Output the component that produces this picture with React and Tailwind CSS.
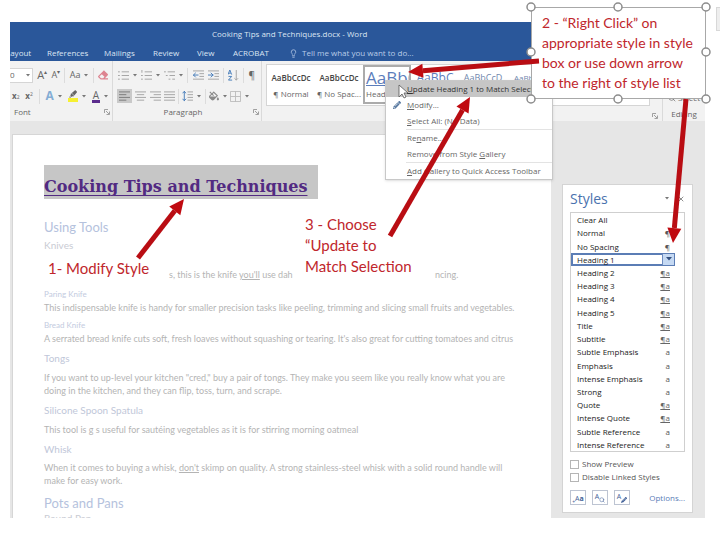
import { FaEraser, FaHighlighter, FaFillDrip, FaPencilAlt } from "react-icons/fa";
import { LuLightbulb, LuSearch, LuX } from "react-icons/lu";

const tabs = [
  { name: "Layout", width: "w-[41px] -ml-1" },
  { name: "References", width: "w-[57px]" },
  { name: "Mailings", width: "w-[49px]" },
  { name: "Review", width: "w-[44px]" },
  { name: "View", width: "w-[36px]" },
  { name: "ACROBAT", width: "w-[54px]" },
];

const styleList = [
  ["Clear All", ""],
  ["Normal", "¶"],
  ["No Spacing", "¶"],
  ["Heading 1", "menu"],
  ["Heading 2", "¶a"],
  ["Heading 3", "¶a"],
  ["Heading 4", "¶a"],
  ["Heading 5", "¶a"],
  ["Title", "¶a"],
  ["Subtitle", "¶a"],
  ["Subtle Emphasis", "a"],
  ["Emphasis", "a"],
  ["Intense Emphasis", "a"],
  ["Strong", "a"],
  ["Quote", "¶a"],
  ["Intense Quote", "¶a"],
  ["Subtle Reference", "a"],
  ["Intense Reference", "a"],
];

// start point and tip of every callout arrow
const arrows = [
  [138, 258, 184, 199],
  [539, 61, 408, 72],
  [390, 236, 470, 97],
  [686, 99, 673, 243],
];

const Arrow = ({ x1, y1, x2, y2 }) => {
  const len = Math.hypot(x2 - x1, y2 - y1);
  const dx = (x2 - x1) / len;
  const dy = (y2 - y1) / len;
  const bx = x2 - dx * 15;
  const by = y2 - dy * 15;
  const points = `${x2},${y2} ${bx - dy * 7},${by + dx * 7} ${bx + dy * 7},${by - dx * 7}`;
  return (
    <g>
      <line x1={x1} y1={y1} x2={bx} y2={by} stroke="#b90d13" strokeWidth="5" />
      <polygon points={points} fill="#c00a10" />
    </g>
  );
};

const Caret = () => (
  <svg viewBox="0 0 4 3" className="w-1 h-[3px] shrink-0" aria-hidden="true">
    <path d="M0 0h4L2 2.5z" fill="#777" />
  </svg>
);

const Tool = ({ label, caret, active, children }) => (
  <button
    aria-label={label}
    className={`h-[14px] flex items-center justify-center gap-1 ${active ? "bg-[#c9c9c9] px-[2px]" : ""}`}
  >
    {children}
    {caret && <Caret />}
  </button>
);

const Lines = ({ d, color = "#a0a0a0", children }) => (
  <svg viewBox="0 0 12 12" className="w-[11px] h-[11px]" fill="none" stroke={color} aria-hidden="true">
    <path d={d} />
    {children}
  </svg>
);

const Divider = () => <span className="w-px h-[15px] bg-[#dcdcdc]" />;

const Launcher = () => (
  <button aria-label="More options" className="w-[6px] h-[6px]">
    <svg viewBox="0 0 6 6" className="w-[6px] h-[6px]" fill="none" stroke="#8a8a8a" strokeWidth="0.8">
      <path d="M0.5 4V0.5H4M2 2l3 3M5.5 2.5v3h-3" />
    </svg>
  </button>
);

const FontGroup = () => (
  <div className="w-[103px] shrink-0 border-r border-[#dadada] flex flex-col">
    <div className="h-[28px] flex items-center justify-between pr-1">
      <label className="flex items-center w-[23px] h-[15px] bg-white border border-l-0 border-[#d5d5d5] pr-[2px]">
        <input aria-label="Font size" defaultValue="0" className="w-[16px] min-w-0 text-[8px] leading-3 outline-none" />
        <Caret />
      </label>
      <Tool label="Grow font"><span className="text-[11px]">A</span><sup className="text-[6px] -ml-1">▴</sup></Tool>
      <Tool label="Shrink font"><span className="text-[9px]">A</span><sup className="text-[6px] -ml-1">▾</sup></Tool>
      <Divider />
      <Tool label="Change case" caret><span className="text-[9px]">Aa</span></Tool>
      <Divider />
      <Tool label="Clear formatting"><FaEraser className="w-[10px] h-[10px] text-[#dd8390]" /></Tool>
    </div>
    <div className="h-[14px] flex items-center justify-between pl-[2px] pr-1">
      <Tool label="Subscript"><b className="text-[8px]">x</b><sub className="text-[5px] -ml-1">2</sub></Tool>
      <Tool label="Superscript"><b className="text-[8px]">x</b><sup className="text-[5px] -ml-1">2</sup></Tool>
      <Divider />
      <Tool label="Text effects" caret><span className="text-[12px] font-bold text-[#84add5]">A</span></Tool>
      <Tool label="Highlight" caret>
        <span className="border-b-4 border-[#f6f032] px-px"><FaHighlighter className="w-[8px] h-[8px]" /></span>
      </Tool>
      <Tool label="Font color" caret>
        <span className="border-b-3 border-[#5b2c8d] px-px text-[10px] leading-[10px]">A</span>
      </Tool>
    </div>
    <div className="h-[18px] mt-auto flex items-center justify-between pl-1 pr-[2px]">
      <span>Font</span>
      <Launcher />
    </div>
  </div>
);

const ParagraphGroup = () => (
  <div className="w-[149px] shrink-0 border-r border-[#dadada] flex flex-col">
    <div className="h-[28px] flex items-center justify-between pl-[5px] pr-[6px]">
      <Tool label="Bullets" caret><Lines d="M0 2h2M0 6h2M0 10h2M4 2h8M4 6h8M4 10h8" /></Tool>
      <Tool label="Numbering" caret><Lines d="M1 0v3M0 6h2M0 10h2M4 2h8M4 6h8M4 10h8" /></Tool>
      <Tool label="Multilevel list" caret><Lines d="M0 2h2M2 6h2M5 10h2M4 2h8M6 6h6M9 10h3" /></Tool>
      <Divider />
      <Tool label="Decrease indent"><Lines d="M0 1h12M7 4h5M7 7h5M0 10h12"><path d="M6 5.5H0M3 3L0.5 5.5L3 8" stroke="#4178b8" /></Lines></Tool>
      <Tool label="Increase indent"><Lines d="M0 1h12M7 4h5M7 7h5M0 10h12"><path d="M0 5.5h6M3 3l2.5 2.5L3 8" stroke="#4178b8" /></Lines></Tool>
      <Divider />
      <Tool label="Sort"><Lines d="M9 0v11M7 9l2 2 2-2" ><path d="M0 5l2-5 2 5M1 3.5h2M0.5 7h3.5l-3.5 4h4" stroke="#4178b8" /></Lines></Tool>
      <Divider />
      <Tool label="Show marks"><span className="text-[10px]">¶</span></Tool>
    </div>
    <div className="h-[14px] flex items-center justify-between pl-1 pr-[12px]">
      <Tool label="Align left" active><Lines color="#777" d="M0 1h12M0 4h8M0 7h12M0 10h8" /></Tool>
      <Tool label="Center"><Lines d="M0 1h12M2 4h8M0 7h12M2 10h8" /></Tool>
      <Tool label="Align right"><Lines d="M0 1h12M4 4h8M0 7h12M4 10h8" /></Tool>
      <Tool label="Justify"><Lines d="M0 1h12M0 4h12M0 7h12M0 10h12" /></Tool>
      <Divider />
      <Tool label="Line spacing" caret><Lines d="M6 1h6M6 4h6M6 7h6M6 10h6"><path d="M2.5 0v11M0.5 2.5l2-2 2 2M0.5 8.5l2 2 2-2" stroke="#4178b8" /></Lines></Tool>
      <Divider />
      <Tool label="Shading" caret><FaFillDrip className="w-[10px] h-[10px] text-[#8a8a8a]" /></Tool>
      <Tool label="Borders" caret><Lines color="#bbb" d="M0.5 0.5h11v11h-11zM6 0v12M0 6h12" /></Tool>
    </div>
    <div className="h-[18px] mt-auto flex items-center pr-[2px]">
      <span className="flex-1 text-center">Paragraph</span>
      <Launcher />
    </div>
  </div>
);

const Tile = ({ preview, name, look, selected }) => (
  <button
    className={`w-[48px] shrink-0 h-[39px] flex flex-col overflow-hidden whitespace-nowrap ${selected ? "border-2 border-[#ababab] items-start pl-px" : "items-center pt-[2px]"}`}
  >
    <span className={`h-[22px] flex items-center ${look}`}>{preview}</span>
    <span className="leading-[10px]">{name}</span>
  </button>
);

const Ribbon = () => (
  <div className="h-[60px] shrink-0 bg-[#f2f2f2] flex text-[8px] text-[#666]">
    <FontGroup />
    <ParagraphGroup />
    <div className="flex-1 min-w-0 flex flex-col border-r border-[#dadada]">
      <div className="h-[42px] mt-[3px] ml-1 mr-3 bg-white border border-[#d5d5d5] flex overflow-hidden">
        <Tile preview="AaBbCcDc" name="¶ Normal" look="text-[8px] font-semibold text-[#444]" />
        <Tile preview="AaBbCcDc" name="¶ No Spac..." look="text-[8px] font-semibold text-[#444]" />
        <Tile preview="AaBbC" name="Heading 1" look="text-[17px] text-[#5c7dbb] underline decoration-1" selected />
        <Tile preview="AaBbC" name="Heading 2" look="text-[12px] text-[#5c7dbb]" />
        <Tile preview="AaBbCcD" name="Heading 3" look="text-[9px] text-[#7288ae]" />
        <Tile preview="AaBbCcD" name="Heading 4" look="text-[8px] text-[#7288ae]" />
      </div>
      <div className="mt-auto pb-[2px] pr-1 flex justify-end"><Launcher /></div>
    </div>
    <div className="w-[42px] shrink-0 flex flex-col justify-end items-center gap-1 pb-px">
      <button className="flex items-center gap-[2px] leading-3"><LuSearch className="w-[8px] h-[8px]" />Select</button>
      <span className="leading-3">Editing</span>
    </div>
  </div>
);

const Document = () => (
  <article className="flex-1 min-w-0 mt-[13px] ml-[2px] pl-[31px] pt-[30px] bg-white border-l border-t border-[#d6d6d6] overflow-hidden whitespace-nowrap font-['Lato',sans-serif] text-[9px] leading-[13px] text-[#b4b4b4]">
    <h1 className="w-[274px] h-[34px] pt-[10px] bg-[#c6c6c6] font-['DejaVu_Serif',serif] font-bold text-[16px] leading-[24px] text-[#522a82] underline decoration-1 underline-offset-3">
      Cooking Tips and Techniques
    </h1>
    <h2 className="mt-[19px] text-[13px] leading-[18px] text-[#b5c2dd]">Using Tools</h2>
    <h3 className="mt-[3px] text-[10px] text-[#c9cbd3]">Knives</h3>
    <p className="mt-[16px] flex pl-[125px]">
      <span className="w-[266px]">s, this is the knife <u>you'll</u> use dah</span>
      <span>ncing.</span>
    </p>
    <h4 className="mt-[7px] text-[8px] text-[#c3cbe0]">Paring Knife</h4>
    <p>This indispensable knife is handy for smaller precision tasks like peeling, trimming and slicing small fruits and vegetables.</p>
    <h4 className="mt-[5px] text-[8px] text-[#c3cbe0]">Bread Knife</h4>
    <p>A serrated bread knife cuts soft, fresh loaves without squashing or tearing. It's also great for cutting tomatoes and citrus</p>
    <h3 className="mt-[7px] text-[10px] text-[#bfc7d9]">Tongs</h3>
    <p className="mt-[6px]">
      If you want to up-level your kitchen "cred," buy a pair of tongs. They make you seem like you really know what you are
      <br />
      doing in the kitchen, and they can flip, toss, turn, and scrape.
    </p>
    <h3 className="mt-[7px] text-[10px] text-[#bfc7d9]">Silicone Spoon Spatula</h3>
    <p className="mt-[6px]">This tool is g s useful for sautéing vegetables as it is for stirring morning oatmeal</p>
    <h3 className="mt-[7px] text-[10px] text-[#bfc7d9]">Whisk</h3>
    <p className="mt-[5px]">
      When it comes to buying a whisk, <u>don't</u> skimp on quality. A strong stainless-steel whisk with a solid round handle will
      <br />
      make for easy work.
    </p>
    <h2 className="mt-[7px] text-[13px] leading-[18px] text-[#b5c2dd]">Pots and Pans</h2>
    <h3 className="text-[10px] text-[#c9cbd3]">Round Pan</h3>
  </article>
);

const Mark = ({ kind }) => {
  if (kind === "menu") {
    return (
      <span className="w-[12px] h-[11px] -mr-[1px] bg-[#c5d9f3] border-l border-[#6d8cc0] flex items-center justify-center">
        <svg viewBox="0 0 6 4" className="w-[6px] h-1"><path d="M0 0h6L3 3.5z" fill="#33507f" /></svg>
      </span>
    );
  }
  return <span className={kind === "¶a" ? "underline text-[#666]" : "text-[#555]"}>{kind}</span>;
};

const StylesPane = () => (
  <aside className="w-[131px] shrink-0 ml-[11px] mr-[12px] mt-[63px] mb-[5px] px-[7px] bg-white border border-[#d4d4d4] text-[8px] flex flex-col">
    <div className="h-[27px] shrink-0 flex items-center">
      <h2 className="flex-1 text-[14px] text-[#4a72ae]">Styles</h2>
      <button aria-label="Pane options" className="mr-2"><Caret /></button>
      <button aria-label="Close pane"><LuX className="w-[8px] h-[8px] text-[#555]" /></button>
    </div>
    <ul className="h-[240px] shrink-0 border border-[#cfcfcf] flex flex-col text-[#222]">
      {styleList.map(([name, kind]) => (
        <li key={name} className="flex-1 flex min-h-0">
          <button
            className={`flex-1 mr-[9px] flex items-center justify-between leading-[11px] ${kind === "menu" ? "border-2 border-[#5b7db5] pl-1" : "pl-[6px] pr-[5px]"}`}
          >
            <span>{name}</span>
            <Mark kind={kind} />
          </button>
        </li>
      ))}
    </ul>
    <div className="mt-[6px] flex flex-col gap-px text-[#555]">
      {["Show Preview", "Disable Linked Styles"].map((name) => (
        <label key={name} className="h-[12px] flex items-center gap-[3px]">
          <input type="checkbox" className="appearance-none w-[9px] h-[9px] border border-[#b5b5b5] bg-white" />
          {name}
        </label>
      ))}
    </div>
    <div className="mt-[7px] flex items-center gap-[6px]">
      <button aria-label="New style" className="w-[16px] h-[15px] border border-[#bdc4d2] text-[7px] text-[#3f5f97] flex items-end justify-center">
        <sup className="text-[5px]">+</sup>A<b>a</b>
      </button>
      <button aria-label="Style inspector" className="w-[16px] h-[15px] border border-[#bdc4d2] text-[#3f5f97] flex items-center justify-center">
        <span className="text-[7px]">A</span><LuSearch className="w-[6px] h-[6px] mt-1" />
      </button>
      <button aria-label="Manage styles" className="w-[16px] h-[15px] border border-[#bdc4d2] text-[#3f5f97] flex items-center justify-center">
        <span className="text-[7px]">A</span><FaPencilAlt className="w-[6px] h-[6px] mt-1" />
      </button>
      <a href="#options" className="ml-auto text-[#5a7db8]">Options...</a>
    </div>
  </aside>
);

const MenuItem = ({ icon, active, children }) => (
  <button className={`w-full h-4 flex items-center text-left whitespace-nowrap ${active ? "bg-[#c6c6c6] text-[#333]" : ""}`}>
    <span className="w-[21px] flex justify-center">{icon}</span>
    <span>{children}</span>
  </button>
);

const ContextMenu = () => (
  <div className="absolute left-[385px] top-[80px] w-[168px] bg-white border border-[#c8c8c8] text-[8px] text-[#666] shadow-sm">
    <MenuItem active><u>U</u>pdate Heading 1 to Match Selection</MenuItem>
    <MenuItem icon={<FaPencilAlt className="w-[8px] h-[8px] text-[#56779f]" />}><u>M</u>odify...</MenuItem>
    <MenuItem><u>S</u>elect All: (No Data)</MenuItem>
    <hr className="border-[#e3e3e3] ml-5" />
    <MenuItem>Re<u>n</u>ame...</MenuItem>
    <MenuItem>Remove from Style <u>G</u>allery</MenuItem>
    <hr className="border-[#e3e3e3] ml-5" />
    <MenuItem><u>A</u>dd Gallery to Quick Access Toolbar</MenuItem>
  </div>
);

const Handle = ({ x, y }) => <circle cx={x} cy={y} r="4" fill="#fff" stroke="#8c8c8c" strokeWidth="1.5" />;

const App = () => {
  return (
    <div className="relative h-screen bg-white pt-[22px] pr-[15px] pb-[23px] pl-[10px] flex flex-col overflow-hidden font-['Open_Sans',sans-serif]">
      {/* Title bar and tabs */}
      <header className="shrink-0 bg-[#2a579a] text-[8px] text-[#dbe5f3]">
        <div className="h-[23px] flex items-center pl-[202px]">Cooking Tips and Techniques.docx - Word</div>
        <nav className="h-4 flex items-center overflow-hidden">
          {tabs.map((tab) => (
            <button key={tab.name} className={`text-left shrink-0 ${tab.width}`}>
              {tab.name}
            </button>
          ))}
          <button className="ml-[2px] flex items-center gap-1 text-[#b9cce8]">
            <LuLightbulb className="w-[9px] h-[9px]" />
            Tell me what you want to do...
          </button>
        </nav>
      </header>

      <Ribbon />

      <main className="flex-1 min-h-0 bg-[#e6e6e6] flex overflow-hidden">
        <Document />
        <StylesPane />
      </main>

      <ContextMenu />

      {/* Step notes */}
      <div className="font-['Lato',sans-serif] text-[15px] text-[#c0262c]">
        <p className="absolute left-[48px] top-[258px] leading-[21px]">1- Modify Style</p>
        <p className="absolute left-[305px] top-[214px] leading-[21px]">
          3 - Choose
          <br />
          “Update to
          <br />
          Match Selection
        </p>
        <p className="absolute left-[531px] top-[7px] w-[175px] h-[92px] pl-[10px] pt-[5px] text-[14px] leading-5 bg-white border border-[#a8a8a8] whitespace-nowrap">
          2 - “Right Click” on
          <br />
          appropriate style in style
          <br />
          box or use down arrow
          <br />
          to the right of style list
        </p>
      </div>
      <span className="absolute right-0 top-[7px] w-1 h-6 bg-[#eeeeee] border border-r-0 border-[#d8d8d8]" />

      <svg className="absolute inset-0 w-full h-full pointer-events-none" aria-hidden="true">
        <path d="M399 85v12l3-3 2 4 2-1-2-4h4z" fill="#fff" stroke="#555" strokeWidth="0.8" />
        {[531, 618, 706].map((x) => <Handle key={x} x={x} y={7} />)}
        {[531, 706].map((x) => <Handle key={x} x={x} y={52} />)}
        {[531, 618, 706].map((x) => <Handle key={x} x={x} y={99} />)}
        {arrows.map(([x1, y1, x2, y2]) => (
          <Arrow key={x1} x1={x1} y1={y1} x2={x2} y2={y2} />
        ))}
      </svg>
    </div>
  );
};

export default App;
